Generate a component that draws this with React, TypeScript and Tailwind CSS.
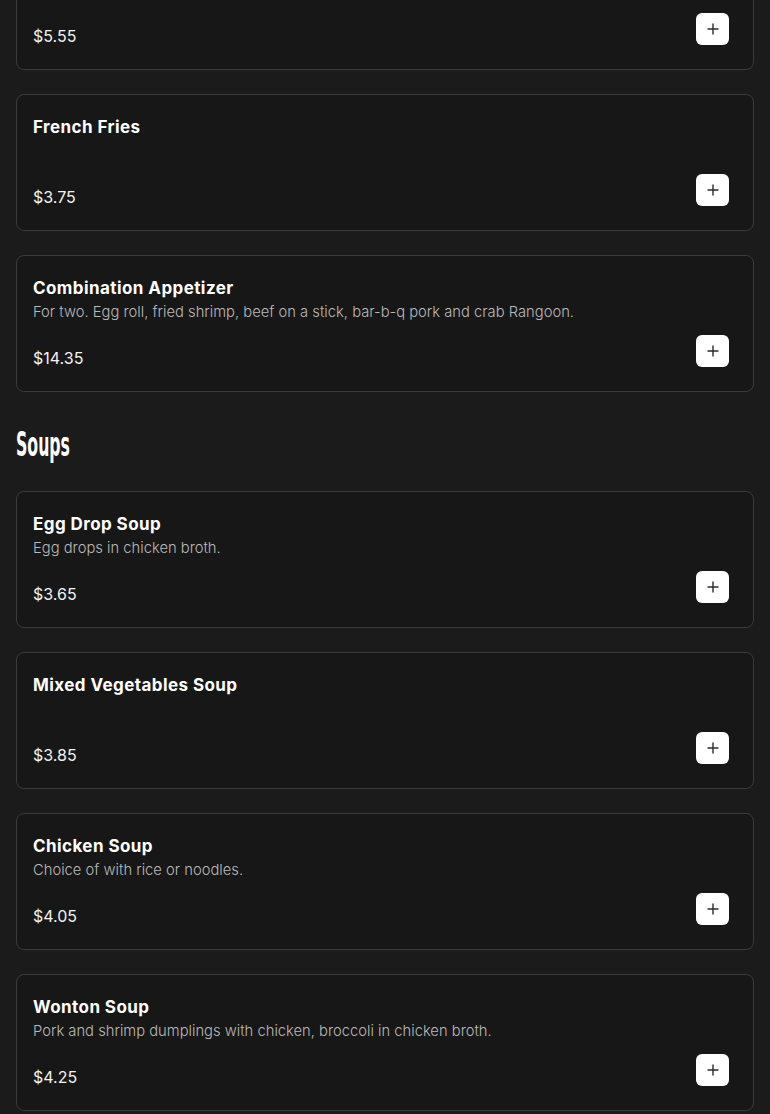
import React from "react";

type Item = { name: string; desc?: string; price: string };

const Plus = () => (
  <svg width="12" height="12" viewBox="0 0 12 12" fill="none">
    <path d="M6 1v10M1 6h10" stroke="#2b2b2b" strokeWidth="1.4" strokeLinecap="round" />
  </svg>
);

const Card = ({ item }: { item: Item }) => (
  <div className="h-[137px] rounded-lg border border-[#3b3b3b] bg-[#171717] px-4 pt-4">
    <div className="h-[30px] text-[17px] leading-[32px] font-bold tracking-[0.025em] text-white">{item.name}</div>
    <div className="h-[20px] text-[14.75px] leading-[20px] font-light text-[#bababa]">{item.desc ?? ""}</div>
    <div className="mt-[13px] flex h-[35px] items-end justify-between">
      <span className="text-[16px] leading-[24px] text-[#f2f2f2]">{item.price}</span>
      <button className="mr-2 mb-[3px] flex h-[32px] w-[33px] items-center justify-center rounded-md bg-white">
        <Plus />
      </button>
    </div>
  </div>
);

const appetizers: Item[] = [
  { name: "", desc: "", price: "$5.55" },
  { name: "French Fries", price: "$3.75" },
  {
    name: "Combination Appetizer",
    desc: "For two. Egg roll, fried shrimp, beef on a stick, bar-b-q pork and crab Rangoon.",
    price: "$14.35",
  },
];

const soups: Item[] = [
  { name: "Egg Drop Soup", desc: "Egg drops in chicken broth.", price: "$3.65" },
  { name: "Mixed Vegetables Soup", price: "$3.85" },
  { name: "Chicken Soup", desc: "Choice of with rice or noodles.", price: "$4.05" },
  { name: "Wonton Soup", desc: "Pork and shrimp dumplings with chicken, broccoli in chicken broth.", price: "$4.25" },
];

export default function App() {
  return (
    <div
      className="h-[1114px] w-full overflow-hidden bg-[#1b1b1b]"
      style={{ fontFamily: "Inter, 'Noto Sans', sans-serif" }}
    >
      <div className="mt-[-67px] px-4">
        <div className="flex flex-col gap-6">
          {appetizers.map((it, i) => (
            <Card key={i} item={it} />
          ))}
        </div>
        <h2
          className="mt-[35px] mb-[28px] h-[36px] origin-left scale-x-[0.53] text-[33px] leading-[36px] font-bold text-white"
          style={{ fontFamily: "'Liberation Sans Narrow', 'DejaVu Sans Condensed', sans-serif" }}
        >
          Soups
        </h2>
        <div className="flex flex-col gap-6 pb-6">
          {soups.map((it) => (
            <Card key={it.name} item={it} />
          ))}
        </div>
      </div>
    </div>
  );
}
